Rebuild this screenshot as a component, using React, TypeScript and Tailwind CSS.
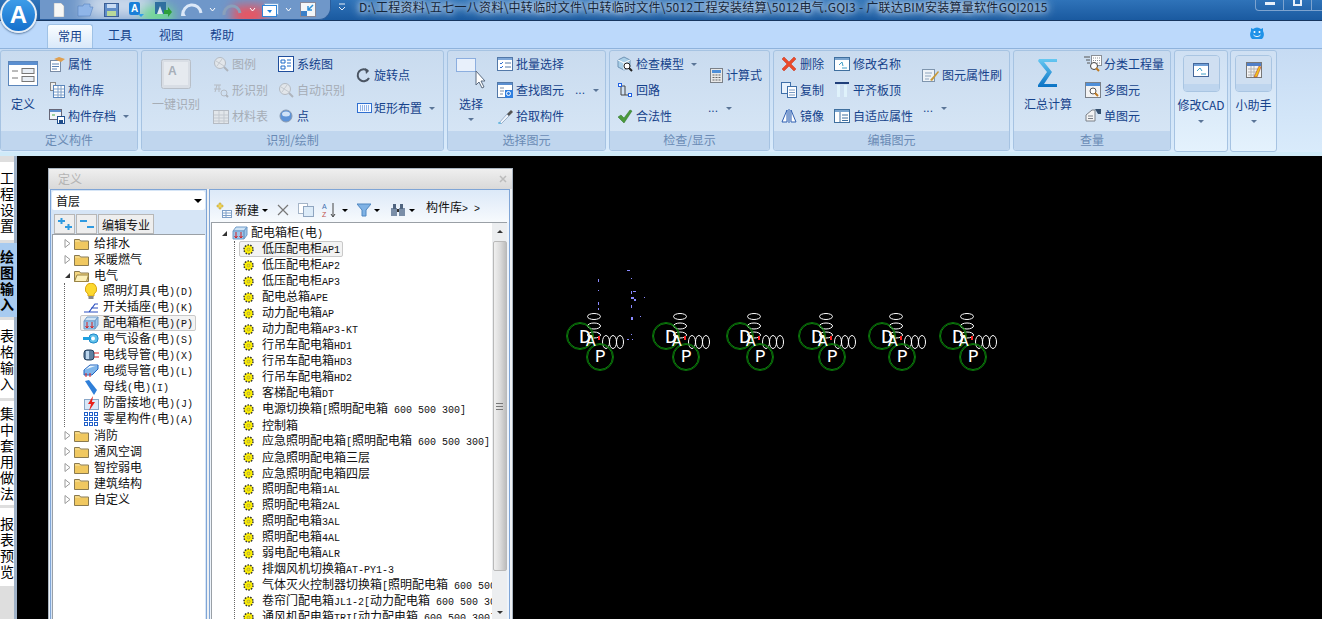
import type { ReactNode } from "react";

const FONT = "font-['Noto_Sans_CJK_SC','Noto_Sans',sans-serif]";

// 半角字符用小一号等宽字，接近原图的宋体点阵宽度
function Mixed({ text }: { text: string }) {
  const parts = text.split(/([\x20-\x7e]+)/).filter(Boolean);
  return (
    <>
      {parts.map((p, i) =>
        /^[\x20-\x7e]+$/.test(p) ? (
          <span key={i} className="font-['Liberation_Mono',monospace] text-[10px] whitespace-pre">
            {p}
          </span>
        ) : (
          <span key={i}>{p}</span>
        ),
      )}
    </>
  );
}

function Ico({ w = 16, h = 16, children }: { w?: number; h?: number; children: ReactNode }) {
  return (
    <svg width={w} height={h} viewBox={`0 0 ${w} ${h}`} className="shrink-0">
      {children}
    </svg>
  );
}

/* ---------- ribbon icons ---------- */
const I = {
  define: (
    <Ico w={30} h={25}>
      <rect x=".5" y=".5" width="29" height="24" fill="#fff" stroke="#5b86bb" />
      <rect x="1" y="1" width="28" height="3" fill="#5b8fd0" />
      <path d="M4 10h6M4 17h6" stroke="#777" />
      <rect x="14" y="7.5" width="12" height="5" fill="#e8eef5" stroke="#777" />
      <rect x="14" y="15.5" width="12" height="5" fill="#e8eef5" stroke="#777" />
    </Ico>
  ),
  attr: (
    <Ico>
      <rect x="1.5" y="4.5" width="10" height="11" fill="#fff" stroke="#7a8ca5" />
      <path d="M3 8h7M3 10.5h7M3 13h5" stroke="#5d83b5" />
      <path d="M5 3l5-2 6 2-4 3z" fill="#e0a050" />
    </Ico>
  ),
  lib: (
    <Ico>
      <rect x="1.5" y=".5" width="5" height="8" fill="#eee" stroke="#888" />
      <rect x="4.5" y="3.5" width="11" height="12" fill="#fff" stroke="#5b86bb" />
      <path d="M5 7h10M5 10h10M5 13h10M9 4v11M12 4v11" stroke="#7fa0c8" />
    </Ico>
  ),
  save: (
    <Ico>
      <rect x=".5" y="1.5" width="12" height="10" fill="#f2f5f9" stroke="#667" />
      <rect x="1" y="2" width="11" height="2" fill="#5b8fd0" />
      <path d="M3 7h3" stroke="#4a4" />
      <rect x="8.5" y="8.5" width="7" height="7" fill="#fff" stroke="#1f4e8c" />
      <rect x="10" y="12" width="4" height="3" fill="#1f4e8c" />
    </Ico>
  ),
  key: (
    <Ico w={30} h={30}>
      <rect x=".5" y=".5" width="29" height="29" rx="2" fill="#d9dee5" stroke="#b8bfc8" />
      <rect x="3" y="3" width="24" height="23" fill="#e6eaef" />
      <text x="7" y="16" fontSize="12" fontWeight="700" fill="#a7afb9" fontFamily="Liberation Sans">A</text>
    </Ico>
  ),
  gray: (
    <Ico>
      <circle cx="7" cy="7" r="5.5" fill="#e2e6ea" stroke="#b5bbc3" />
      <path d="M3 5l8 5M4 10l5-7" stroke="#c5cad0" />
      <path d="M11 11l4 4" stroke="#aeb4bc" strokeWidth="2" />
    </Ico>
  ),
  shapeGray: (
    <Ico>
      <path d="M1 3h7M1 7h7M4 3l-2 7M6 3v7" stroke="#b5bbc3" fill="none" />
      <circle cx="11" cy="11" r="3" fill="none" stroke="#b5bbc3" />
      <path d="M13 13l2 2" stroke="#aeb4bc" strokeWidth="2" />
    </Ico>
  ),
  tableGray: (
    <Ico>
      <rect x=".5" y="2.5" width="15" height="13" fill="#e2e6ea" stroke="#b5bbc3" />
      <path d="M1 7h14M1 10h14M1 13h14M6 3v12M11 3v12" stroke="#c3c9d0" />
    </Ico>
  ),
  sys: (
    <Ico>
      <rect x=".5" y=".5" width="15" height="15" fill="#fff" stroke="#1f4e9c" />
      <path d="M3 4h4v3H3zM9 4h4M9 7h4M9 10h4M3 10h4v3H3z" fill="none" stroke="#1f6ac8" />
    </Ico>
  ),
  dot: (
    <Ico>
      <circle cx="8" cy="8" r="6" fill="#5d93d8" stroke="#8a9bb2" />
      <ellipse cx="8" cy="6" rx="4" ry="2.5" fill="#cfe2f8" />
    </Ico>
  ),
  rotate: (
    <Ico>
      <path d="M12 4a6 6 0 1 0 1 7" fill="none" stroke="#4b5563" strokeWidth="2" />
      <path d="M9 1l4 3-3 3z" fill="#4b5563" />
    </Ico>
  ),
  rect: (
    <Ico w={15} h={12}>
      <rect x=".5" y="1.5" width="14" height="9" fill="#f5f9ff" stroke="#2f6fd0" />
      <path d="M3 4h9M3 6h9M3 8h9" stroke="#2f6fd0" strokeDasharray="1 1" />
    </Ico>
  ),
  pick: (
    <Ico w={30} h={32}>
      <rect x=".5" y=".5" width="19" height="13" fill="#e8f0fb" stroke="#3f77c8" strokeDasharray="1 1" />
      <path d="M20 13v14l3-3 3 6 2-1-3-6h4z" fill="#fff" stroke="#5b6b80" />
    </Ico>
  ),
  batch: (
    <Ico>
      <rect x=".5" y="1.5" width="15" height="13" fill="#fff" stroke="#5278a8" />
      <rect x="1" y="2" width="14" height="2" fill="#7fa7d8" />
      <path d="M3 7l1 1 2-2M3 11l1 1 2-2" stroke="#2f6fd0" fill="none" />
      <path d="M8 7h6M8 11h6" stroke="#5278a8" />
    </Ico>
  ),
  find: (
    <Ico>
      <rect x=".5" y=".5" width="15" height="15" fill="#fff" stroke="#5278a8" />
      <rect x="1" y="1" width="14" height="2" fill="#5b8fd0" />
      <path d="M3 6h4M3 9h4M3 12h3" stroke="#7a8ca5" />
      <rect x="8" y="8" width="8" height="8" fill="#2f7fe0" />
      <circle cx="11.5" cy="11.5" r="2" fill="none" stroke="#fff" />
    </Ico>
  ),
  dropper: (
    <Ico>
      <path d="M2 15l8-9 2 2-8 8z" fill="#eef4fb" stroke="#9db2cc" />
      <path d="M10 6l4-4 2 2-4 4z" fill="#555" />
      <path d="M1 15h3" stroke="#3fb0e0" />
    </Ico>
  ),
  check: (
    <Ico>
      <path d="M1 4l6-3 6 3v7l-6 3-6-3z" fill="#a9cfe8" stroke="#6f93b4" />
      <path d="M1 4l6 3 6-3M7 7v7" stroke="#fff" fill="none" />
      <circle cx="10" cy="10" r="3" fill="#fff" stroke="#222" />
      <path d="M12 12l3 3" stroke="#222" strokeWidth="2" />
    </Ico>
  ),
  loop: (
    <Ico>
      <path d="M4 4v9h9" fill="none" stroke="#444" />
      <path d="M4 4h4v9" fill="none" stroke="#444" />
      <rect x="1.5" y="1.5" width="3" height="3" fill="#fff" stroke="#1f5fe0" />
      <rect x="11.5" y="11.5" width="3" height="3" fill="#fff" stroke="#1f5fe0" />
    </Ico>
  ),
  tick: (
    <Ico>
      <path d="M1 9l3-2 3 3 6-8 2 1-8 12z" fill="#4a9a3a" stroke="#2d6e2a" strokeWidth=".5" />
    </Ico>
  ),
  calc: (
    <Ico w={13} h={15}>
      <rect x=".5" y=".5" width="12" height="14" fill="#e8e8e8" stroke="#7a8088" />
      <rect x="2" y="2" width="9" height="3" fill="#4f8fd8" />
      <path d="M2.5 7h2M5.500 7h2M8.500 7h2M2.500 9.500h2M5.500 9.500h2M8.500 9.500h2M2.500 12h2M5.500 12h2M8.500 12h2" stroke="#666" />
    </Ico>
  ),
  del: (
    <Ico>
      <path d="M1 3l2-2 5 5 5-5 2 2-5 5 5 5-2 2-5-5-5 5-2-2 5-5z" fill="#ea4a2a" stroke="#c8321a" strokeWidth=".5" />
    </Ico>
  ),
  copy: (
    <Ico>
      <rect x=".5" y=".5" width="9" height="11" fill="#e8f2fc" stroke="#3f6fa8" />
      <rect x="6.500" y="4.500" width="9" height="11" fill="#fff" stroke="#3f6fa8" />
      <path d="M8 8h6M8 10.500h6M8 13h6" stroke="#7a9cc4" />
    </Ico>
  ),
  mirror: (
    <Ico>
      <path d="M6 2L1 14h5zM10 2l5 12h-5z" fill="#fff" stroke="#2f5fb0" />
      <path d="M8 1v14" stroke="#2f5fb0" />
    </Ico>
  ),
  rename: (
    <Ico>
      <rect x=".5" y="1.500" width="15" height="13" fill="#fff" stroke="#3f6f9e" />
      <rect x="1" y="2" width="14" height="2" fill="#7aa5d0" />
      <path d="M5 9l3-3 1 4M8 12h5" stroke="#3fa0c8" fill="none" />
    </Ico>
  ),
  align: (
    <Ico>
      <path d="M1 1h14" stroke="#1f3f7a" strokeWidth="2" />
      <rect x="3" y="3" width="3" height="12" fill="#dff2fb" />
      <rect x="10" y="3" width="3" height="12" fill="#dff2fb" />
    </Ico>
  ),
  fit: (
    <Ico>
      <rect x=".5" y="1.500" width="15" height="13" fill="#fff" stroke="#3f6f9e" />
      <rect x="1" y="2" width="14" height="2" fill="#7aa5d0" />
      <path d="M6 4v10M8 7h6M8 10h6M8 12.500h6" stroke="#3f6f9e" />
    </Ico>
  ),
  brush: (
    <Ico w={18} h={16}>
      <rect x=".5" y="2.500" width="12" height="12" fill="#eef3f8" stroke="#7f95ad" />
      <path d="M3 6h7M3 9h6M3 12h4" stroke="#8ea5be" />
      <path d="M8 13l8-9 1 1-7 9z" fill="#c89a3a" />
    </Ico>
  ),
  classify: (
    <Ico w={18} h={18}>
      <path d="M0 2h6M2 5h4M3 8h3" stroke="#555" />
      <rect x="7.500" y=".5" width="10" height="10" fill="#fff" stroke="#8a8f96" />
      <path d="M9 3h7M9 5.500h7M9 8h7" stroke="#8a8f96" strokeDasharray="1 1" />
      <circle cx="10" cy="11" r="3.500" fill="#fff" stroke="#444" />
      <path d="M12 13l3 3" stroke="#c07a20" strokeWidth="2" />
    </Ico>
  ),
  multi: (
    <Ico>
      <rect x=".5" y=".5" width="15" height="15" fill="#f3f3f3" stroke="#7a8088" />
      <rect x="1" y="1" width="14" height="3" fill="#4f8fd8" />
      <circle cx="8" cy="9" r="3" fill="#fff" stroke="#555" />
      <path d="M10 11l3 3" stroke="#c07a20" strokeWidth="2" />
    </Ico>
  ),
  single: (
    <Ico>
      <path d="M1 7l6-5h3v11H1z" fill="#f3f3f3" stroke="#7a8088" />
      <path d="M3 8h5M3 10.500h5" stroke="#7a8088" />
      <path d="M10 1h6v5h-3z" fill="#35506f" />
    </Ico>
  ),
  cad: (
    <Ico>
      <rect x=".5" y="1.500" width="15" height="13" fill="#fff" stroke="#44679a" />
      <rect x="1" y="2" width="14" height="2" fill="#6f9ed6" />
      <path d="M4 9l3-3 2 3M8 12h5" stroke="#3fa0c8" fill="none" />
    </Ico>
  ),
  helper: (
    <Ico>
      <rect x=".5" y=".5" width="15" height="15" fill="#f3f3f3" stroke="#777" />
      <rect x="1" y="1" width="14" height="3" fill="#4f7fc8" />
      <path d="M2 7h10M2 10h10M2 13h10M5 4v11M8 4v11" stroke="#b5b5b5" />
      <path d="M8 15l5-11 2 1-4 10z" fill="#f2c21a" stroke="#a33" strokeWidth=".5" />
    </Ico>
  ),
};

/* ---------- ribbon parts ---------- */
function Caret({ className = "" }: { className?: string }) {
  return <span className={`inline-block h-0 w-0 border-x-[3px] border-t-[3px] border-x-transparent border-t-[#5a7597] ${className}`} />;
}

function Item({ icon, label, off, caret, gap = 3 }: { icon: ReactNode; label: string; off?: boolean; caret?: boolean; gap?: number }) {
  return (
    <div className={`flex h-[26px] items-center whitespace-nowrap ${off ? "text-[#a6adb6]" : "text-[#15428b]"}`}>
      <span className="flex w-4 shrink-0 items-center justify-center">{icon}</span>
      <span style={{ marginLeft: gap }}>{label}</span>
      {caret && <Caret className="ml-[7px]" />}
    </div>
  );
}

function Dots({ className = "" }: { className?: string }) {
  return (
    <div className={`flex h-[26px] items-center gap-[8px] text-[#15428b] ${className}`}>
      <span className="font-['Liberation_Sans',sans-serif] leading-none">...</span>
      <Caret />
    </div>
  );
}

function Big({ icon, label, w, mr = 0, off, caret }: { icon: ReactNode; label: string; w: number; mr?: number; off?: boolean; caret?: boolean }) {
  return (
    <div style={{ width: w, marginRight: mr }} className={`flex shrink-0 flex-col items-center ${off ? "text-[#a6adb6]" : "text-[#15428b]"}`}>
      <div className="flex h-[45px] items-center justify-center">{icon}</div>
      <div className="h-4 whitespace-nowrap leading-4">{label}</div>
      {caret && <Caret className="mt-[6px]" />}
    </div>
  );
}

function Group({ w, label, children }: { w: number; label: string; children: ReactNode }) {
  return (
    <div style={{ width: w }} className="flex h-[101px] shrink-0 flex-col overflow-hidden rounded-[3px] border border-[#a6c3e2] bg-gradient-to-b from-[#c9dbef] to-[#d8e7f6]">
      <div className="flex h-[80px]">{children}</div>
      <div className="h-[19px] bg-[#c0d6ee] text-center leading-[18px] text-[#6a8bb5]">{label}</div>
    </div>
  );
}

function Solo({ w, icon, label, className = "" }: { w: number; icon: ReactNode; label: string; className?: string }) {
  return (
    <div style={{ width: w }} className={`flex h-[102px] shrink-0 flex-col items-center rounded-[3px] border border-[#a6c3e2] bg-gradient-to-b from-[#cfe0f3] to-[#e4f2fd] pt-1 text-[#15428b] ${className}`}>
      <div className="flex h-[37px] w-[37px] flex-col overflow-hidden rounded-[4px] border border-[#a9c5e2]">
        <div className="flex flex-1 items-center justify-center bg-[#cfdff1]">{icon}</div>
        <div className="h-[7px] bg-[#bed5ee]" />
      </div>
      <div className="mt-[5px] h-4 whitespace-nowrap leading-4">{label}</div>
      <Caret className="mt-[7px]" />
    </div>
  );
}

function Ribbon() {
  return (
    <div className="flex h-[104px] shrink-0 gap-[3px] border-t border-[#8fb3dc] bg-gradient-to-b from-[#c6dbf3] to-[#d9ebfb] pt-[1px] text-[12px]">
      <Group w={138} label="定义构件">
        <Big w={44} mr={4} icon={I.define} label="定义" />
        <div>
          <Item icon={I.attr} label="属性" />
          <Item icon={I.lib} label="构件库" />
          <Item icon={I.save} label="构件存档" caret />
        </div>
      </Group>
      <Group w={303} label="识别/绘制">
        <Big w={68} mr={3} icon={I.key} label="一键识别" off />
        <div className="w-[65px]">
          <Item icon={I.gray} label="图例" off />
          <Item icon={I.shapeGray} label="形识别" off />
          <Item icon={I.tableGray} label="材料表" off />
        </div>
        <div className="w-[78px]">
          <Item icon={I.sys} label="系统图" />
          <Item icon={I.gray} label="自动识别" off />
          <Item icon={I.dot} label="点" />
        </div>
        <div className="flex flex-col gap-[7px] pt-[11px]">
          <Item icon={I.rotate} label="旋转点" gap={2} />
          <Item icon={I.rect} label="矩形布置" caret gap={2} />
        </div>
      </Group>
      <Group w={159} label="选择图元">
        <Big w={46} mr={3} icon={I.pick} label="选择" caret />
        <div className="w-[78px]">
          <Item icon={I.batch} label="批量选择" />
          <Item icon={I.find} label="查找图元" />
          <Item icon={I.dropper} label="拾取构件" />
        </div>
        <Dots className="mt-[26px]" />
      </Group>
      <Group w={161} label="检查/显示">
        <div className="w-[98px] shrink-0 pl-[7px]">
          <Item icon={I.check} label="检查模型" caret />
          <Item icon={I.loop} label="回路" />
          <Item icon={I.tick} label="合法性" />
        </div>
        <div className="flex flex-col gap-[7px] pt-[11px]">
          <Item icon={I.calc} label="计算式" gap={2} />
          <Dots />
        </div>
      </Group>
      <Group w={237} label="编辑图元">
        <div className="w-[60px] shrink-0 pl-[7px]">
          <Item icon={I.del} label="删除" />
          <Item icon={I.copy} label="复制" />
          <Item icon={I.mirror} label="镜像" />
        </div>
        <div className="w-[89px] shrink-0">
          <Item icon={I.rename} label="修改名称" />
          <Item icon={I.align} label="平齐板顶" />
          <Item icon={I.fit} label="自适应属性" />
        </div>
        <div className="flex flex-col gap-[7px] pt-[11px]">
          <Item icon={I.brush} label="图元属性刷" gap={3} />
          <Dots />
        </div>
      </Group>
      <Group w={158} label="查量">
        <Big
          w={68}
          mr={3}
          icon={
            <svg width="20" height="29" viewBox="0 0 20 29">
              <defs>
                <linearGradient id="sigma" x1="0" y1="0" x2="0" y2="1">
                  <stop offset="0" stopColor="#66c8f2" />
                  <stop offset="1" stopColor="#0a72c4" />
                </linearGradient>
              </defs>
              <path d="M1 0h18v3H6l8 10-8 12h13v3H0v-2l9-13L0 2z" fill="url(#sigma)" />
            </svg>
          }
          label="汇总计算"
        />
        <div>
          <Item icon={I.classify} label="分类工程量" />
          <Item icon={I.multi} label="多图元" />
          <Item icon={I.single} label="单图元" />
        </div>
      </Group>
      <Solo w={54} icon={I.cad} label="修改CAD" />
      <Solo w={47} icon={I.helper} label="小助手" className="-ml-px" />
    </div>
  );
}

/* ---------- title bar ---------- */
function Quick({ children }: { children: ReactNode }) {
  return <span className="flex h-[20px] w-[26px] shrink-0 items-center justify-center">{children}</span>;
}

function Chevron() {
  return (
    <svg width="7" height="5" viewBox="0 0 7 5" className="shrink-0">
      <path d="M1 1l2.500 3L6 1" fill="none" stroke="#fff" />
    </svg>
  );
}

function TitleBar() {
  return (
    <div className="relative flex h-[21px] shrink-0 items-start overflow-hidden border-b border-[#17365f] bg-gradient-to-b from-[#2f73b9] to-[#1a5aa0]">
      <div className="relative ml-[40px] flex h-[20px] w-[291px] items-center overflow-hidden rounded-br-[12px] border-r border-b border-[#2a5d9c] bg-[#6f97c9] pl-[6px]">
        <span className="absolute left-[45px] top-[-8px] h-[26px] w-[70px] bg-white/70 blur-[9px]" />
        <span className="absolute left-[103px] top-[8px] h-[14px] w-[30px] bg-[#6fe08a] blur-[6px]" />
        <span className="absolute left-[193px] top-[6px] h-[18px] w-[32px] bg-[#f0505a] blur-[6px]" />
        <span className="relative flex items-center">
          <Quick>
            <svg width="14" height="14" viewBox="0 0 14 14"><path d="M2 0h7l3 3v11H2z" fill="#f7f7f5" stroke="#a5a5a5" strokeWidth=".5" /></svg>
          </Quick>
          <Quick>
            <svg width="17" height="14" viewBox="0 0 17 14"><path d="M1 3h5l1-2h6v3h3l-3 9H1z" fill="#8fb5e8" stroke="#4f7ab8" strokeWidth=".5" /></svg>
          </Quick>
          <Quick>
            <svg width="15" height="14" viewBox="0 0 15 14"><rect x=".5" y=".5" width="14" height="13" fill="#5f8cc8" stroke="#3a5f96" /><rect x="3" y="1" width="9" height="4" fill="#c9dcf3" /><rect x="3" y="8" width="9" height="5" fill="#b8d89a" /></svg>
          </Quick>
          <Quick>
            <svg width="18" height="15" viewBox="0 0 18 15"><rect x="1" y="0" width="11" height="13" rx="2" fill="#1a7fd8" /><text x="3" y="10" fontSize="10" fontWeight="700" fill="#fff" fontFamily="Liberation Sans">A</text><path d="M10 12h6l-3 3z" fill="#2fa0e8" /></svg>
          </Quick>
          <Quick>
            <svg width="18" height="15" viewBox="0 0 18 15"><rect x="1" y="0" width="11" height="12" fill="#2f6f9f" /><path d="M3 12l3-8 3 8z" fill="#dfe8f0" /><path d="M10 8h4V5l4 5-4 5v-3h-4z" fill="#2e9e3a" /></svg>
          </Quick>
          <span className="flex w-[41px] items-center gap-[3px] pl-[4px]">
            <svg width="26" height="14" viewBox="0 0 26 14" className="shrink-0"><path d="M3 12a9 9 0 0 1 18-2" fill="none" stroke="#dbe8f8" strokeWidth="3" /><path d="M2 7l4 6-5 0z" fill="#dbe8f8" /></svg>
            <Chevron />
          </span>
          <span className="flex w-[40px] items-center pl-[5px]">
            <svg width="22" height="14" viewBox="0 0 22 14" className="shrink-0"><path d="M2 12a8 8 0 0 1 16-2" fill="none" stroke="#8aa0bb" strokeWidth="3" /></svg>
            <span className="ml-[5px]"><Chevron /></span>
          </span>
          <span className="flex w-[35px] items-center gap-[6px] pl-[5px]">
            <svg width="17" height="14" viewBox="0 0 17 14" className="shrink-0"><rect x="2.500" y=".5" width="14" height="11" fill="#e8f2fc" stroke="#7fa5d0" /><rect x=".5" y="2.500" width="14" height="11" fill="#fff" stroke="#2f85d8" /><path d="M5 7h5l-2 3z" fill="#1f7fd8" /></svg>
            <Chevron />
          </span>
          <svg width="16" height="15" viewBox="0 0 16 15" className="ml-[8px] shrink-0"><rect x=".5" y=".5" width="15" height="14" fill="#f4f6f8" stroke="#889" /><rect x="1" y="9" width="6" height="5" fill="#3a7fc8" /><path d="M13 3l-5 5M8 4v4h4" fill="none" stroke="#2f8fd8" strokeWidth="1.500" /></svg>
        </span>
      </div>
      <svg width="8" height="8" viewBox="0 0 8 8" className="ml-[7px] mt-[3px]"><path d="M1 1h6M1 4l3 3 3-3" fill="none" stroke="#e6eef8" /></svg>
      <span className="ml-[13px] whitespace-nowrap text-[12px] leading-[14px] tracking-[0.26px] text-[#16263a] [text-shadow:0_0_5px_#dce9f7,0_0_8px_#dce9f7,0_0_12px_#dce9f7]">
        D:\工程资料\五七一八资料\中转临时文件\中转临时文件\5012工程安装结算\5012电气.GQI3 - 广联达BIM安装算量软件GQI2015
      </span>
      <div className="absolute right-0 top-0 flex h-[11px] w-[67px] rounded-bl-[4px] border-b border-l border-[#7da3cf]">
        <span className="flex flex-1 items-start justify-center border-r border-[#7da3cf] pt-[2px]"><span className="h-[3px] w-[10px] bg-[#e8f0fa]" /></span>
        <span className="flex flex-1 items-start justify-center border-r border-[#7da3cf]"><span className="h-[6px] w-[9px] border-2 border-t-0 border-[#e8f0fa]" /></span>
        <span className="w-[10px]" />
      </div>
    </div>
  );
}

function Tabs() {
  const names = ["工具", "视图", "帮助"];
  return (
    <div className="flex h-[27px] shrink-0 items-end bg-[#bcd9fb] pl-[47px] text-[12px] text-[#15428b]">
      <div className="h-[24px] w-[46px] rounded-t-[3px] border border-b-0 border-[#9fc2e6] bg-gradient-to-b from-[#fafdff] to-[#d9e9fa] pt-[3px] text-center leading-4">常用</div>
      <div className="flex items-center pb-[5px] pl-[15px]">
        {names.map((n) => (
          <span key={n} className="w-[51px] leading-4">{n}</span>
        ))}
      </div>
      <svg width="18" height="18" viewBox="0 0 18 18" className="ml-auto mb-[6px] mr-[56px]">
        <path d="M3 4l2 1a6 6 0 0 1 8 0l2-1 0 3a7 7 0 0 1-1 8H4a7 7 0 0 1-1-8z" fill="#1e92e8" />
        <circle cx="6.500" cy="8" r="1" fill="#fff" /><circle cx="11.500" cy="8" r="1" fill="#fff" />
        <path d="M5.500 11c2 2 5 2 7 0" fill="none" stroke="#fff" />
      </svg>
    </div>
  );
}

/* ---------- left rail ---------- */
const railTabs = [
  { text: "工程设置", h: 78 },
  { text: "绘图输入", h: 74, active: true },
  { text: "表格输入", h: 78 },
  { text: "集中套用做法", h: 104 },
  { text: "报表预览", h: 78 },
];

function Rail() {
  return (
    <div className="flex w-[17px] shrink-0 flex-col gap-[3px] border-r-[3px] border-[#9fb1c6] bg-[#dedede] pt-[6px]">
      {railTabs.map((t) => (
        <div
          key={t.text}
          style={{ height: t.h }}
          className={`flex shrink-0 flex-col items-center justify-center text-[14px] leading-[16px] text-black ${
            t.active ? "-mr-[3px] bg-[#a8cbf0] font-bold" : "bg-white"
          }`}
        >
          {t.text.split("").map((c, i) => (
            <span key={i} className={t.active ? "-ml-[3px]" : ""}>{c}</span>
          ))}
        </div>
      ))}
    </div>
  );
}

/* ---------- tree icons ---------- */
function Folder({ open }: { open?: boolean }) {
  return (
    <svg width="15" height="13" viewBox="0 0 15 13" className="shrink-0">
      <path d="M.5 2.500h5l1 1.500h8v8.500H.5z" fill="#f5d782" stroke="#8a7a50" />
      {open ? <path d="M3 6h11.500l-2 6.500H.5z" fill="#fdf0b8" stroke="#9a8442" /> : <rect x="1" y="5" width="13" height="7" fill="#f0c860" />}
    </svg>
  );
}

function Arrow({ open }: { open?: boolean }) {
  return open ? (
    <svg width="7" height="7" viewBox="0 0 7 7" className="shrink-0"><path d="M6 1v5H1z" fill="#333" /></svg>
  ) : (
    <svg width="7" height="9" viewBox="0 0 7 9" className="shrink-0"><path d="M1 .5l5 4-5 4z" fill="#fff" stroke="#999" /></svg>
  );
}

function Gear() {
  return (
    <svg width="11" height="11" viewBox="0 0 11 11" className="shrink-0">
      <circle cx="5.500" cy="5.500" r="4.500" fill="#fff200" stroke="#333" strokeWidth="1.500" strokeDasharray="1.500 1.300" />
      <circle cx="5.500" cy="5.500" r="1.500" fill="#f7e600" stroke="#777" strokeWidth=".5" />
    </svg>
  );
}

const kids: { label: string; icon: ReactNode; active?: boolean }[] = [
  { label: "照明灯具(电)(D)", icon: <svg width="14" height="16" viewBox="0 0 14 16"><path d="M7 0a6 6 0 0 1 3 11v2H4v-2A6 6 0 0 1 7 0z" fill="#fcd82e" stroke="#d9a514" /><rect x="4.500" y="13" width="5" height="3" fill="#888" /></svg> },
  { label: "开关插座(电)(K)", icon: <svg width="16" height="14" viewBox="0 0 16 14"><path d="M1 12h5l6-8h3M6 12h9M8 8h7" fill="none" stroke="#2a4fc0" strokeWidth="1.200" /></svg> },
  { label: "配电箱柜(电)(P)", active: true, icon: <svg width="16" height="14" viewBox="0 0 16 14"><path d="M1 5l3-4h11l-3 4z" fill="#cde3f6" stroke="#6f9bc8" /><path d="M1 5h11v8H1zM12 5l3-4v8l-3 4z" fill="#9dc5ea" stroke="#6f9bc8" /><path d="M4 6v6M9 6v6M2.500 10L4 12l1.500-2M7.500 10L9 12l1.500-2" stroke="#d52020" fill="none" /></svg> },
  { label: "电气设备(电)(S)", icon: <svg width="16" height="12" viewBox="0 0 16 12"><rect x="6" y="1" width="9" height="9" rx="4" fill="#5fc0ea" stroke="#1f88c8" /><rect x="0" y="4" width="9" height="3" fill="#1fa0e0" /><circle cx="10" cy="5.500" r="2" fill="#fff" /></svg> },
  { label: "电线导管(电)(X)", icon: <svg width="16" height="12" viewBox="0 0 16 12"><rect x="1" y="1" width="10" height="10" rx="3" fill="#5f7f9f" stroke="#24405f" /><rect x="3" y="2" width="3" height="8" fill="#bcd6ee" /><path d="M11 4h5M11 8h5" stroke="#e02020" /></svg> },
  { label: "电缆导管(电)(L)", icon: <svg width="16" height="14" viewBox="0 0 16 14"><path d="M1 6l6-5h8l-5 6H2z" fill="#e8f4fd" stroke="#1f62c0" /><path d="M1 6v5h8l6-6V1" fill="#7fb5ea" stroke="#1f62c0" /><path d="M3 9v4M7 9v4" stroke="#e02020" /></svg> },
  { label: "母线(电)(I)", icon: <svg width="14" height="15" viewBox="0 0 14 15"><path d="M1 1l4-1 8 10-3 5z" fill="#2f7fd8" /></svg> },
  { label: "防雷接地(电)(J)", icon: <svg width="15" height="15" viewBox="0 0 15 15"><rect x=".5" y="3.500" width="14" height="10" fill="#d9e8f8" stroke="#8aa7c8" /><path d="M9 0L4 8h3l-2 7 6-9H8z" fill="#e8201a" /></svg> },
  { label: "零星构件(电)(A)", icon: <svg width="14" height="14" viewBox="0 0 14 14" fill="none" stroke="#1f5fc8"><rect x=".5" y=".5" width="3" height="3" /><rect x="5.500" y=".5" width="3" height="3" /><rect x="10.500" y=".5" width="3" height="3" /><rect x=".5" y="5.500" width="3" height="3" /><rect x="5.500" y="5.500" width="3" height="3" /><rect x="10.500" y="5.500" width="3" height="3" /><rect x=".5" y="10.500" width="3" height="3" /><rect x="5.500" y="10.500" width="3" height="3" /><rect x="10.500" y="10.500" width="3" height="3" /></svg> },
];

function FolderRow({ label, open }: { label: string; open?: boolean }) {
  return (
    <div className="flex h-4 items-center pl-[10px]">
      <span className="flex w-[9px] justify-center"><Arrow open={open} /></span>
      <span className="ml-[2px]"><Folder open={open} /></span>
      <span className="ml-[5px] leading-4">{label}</span>
    </div>
  );
}

function LeftPanel() {
  return (
    <div className="flex w-[157px] shrink-0 flex-col border border-b-0 border-[#7fa5d6] bg-[#d6e5f6] text-[12px] text-[#111]">
      <div className="mx-[1px] mt-[1px] flex h-[19px] items-center justify-between rounded-[2px] bg-white pl-[4px] pr-[3px] leading-4">
        首层
        <span className="h-0 w-0 border-x-[4px] border-t-[4px] border-x-transparent border-t-black" />
      </div>
      <div className="ml-[3px] mt-[4px] flex h-[20px] gap-[1px]">
        <span className="flex w-[21px] items-center justify-center border border-[#b7b7b7] bg-[#eeeeee]">
          <svg width="16" height="16" viewBox="0 0 16 16"><path d="M1 5h7M4.500 2v6M8 11h7M11.500 8v6" stroke="#2f9ae0" strokeWidth="2" /></svg>
        </span>
        <span className="flex w-[21px] items-center justify-center border border-[#b7b7b7] bg-[#eeeeee]">
          <svg width="16" height="16" viewBox="0 0 16 16"><path d="M1 5h7M8 11h7" stroke="#2f9ae0" strokeWidth="2" /></svg>
        </span>
        <span className="w-[56px] border border-[#b7b7b7] bg-[#eeeeee] text-center leading-[19px]">编辑专业</span>
      </div>
      <div className="ml-[1px] mr-[1px] flex-1 overflow-hidden border-l border-t border-[#9aa0a6] bg-white">
        <FolderRow label="给排水" />
        <FolderRow label="采暖燃气" />
        <FolderRow label="电气" open />
        <div className="ml-[11px] border-l border-dotted border-[#666] pl-[15px]">
          {kids.map((k) => (
            <div
              key={k.label}
              className={`flex h-4 w-fit items-center whitespace-nowrap rounded-[2px] border pl-[2px] pr-[2px] ${k.active ? "border-[#c9c9c9] bg-[#f3f3f3]" : "border-transparent"}`}
            >
              <span className="flex w-4 justify-center">{k.icon}</span>
              <span className="ml-[4px] leading-[14px]">
                <Mixed text={k.label} />
              </span>
            </div>
          ))}
        </div>
        {["消防", "通风空调", "智控弱电", "建筑结构", "自定义"].map((n) => (
          <FolderRow key={n} label={n} />
        ))}
      </div>
    </div>
  );
}

/* ---------- right panel ---------- */
const rows = [
  "低压配电柜AP1",
  "低压配电柜AP2",
  "低压配电柜AP3",
  "配电总箱APE",
  "动力配电箱AP",
  "动力配电箱AP3-KT",
  "行吊车配电箱HD1",
  "行吊车配电箱HD3",
  "行吊车配电箱HD2",
  "客梯配电箱DT",
  "电源切换箱[照明配电箱 600 500 300]",
  "控制箱",
  "应急照明配电箱[照明配电箱 600 500 300]",
  "应急照明配电箱三层",
  "应急照明配电箱四层",
  "照明配电箱1AL",
  "照明配电箱2AL",
  "照明配电箱3AL",
  "照明配电箱4AL",
  "弱电配电箱ALR",
  "排烟风机切换箱AT-PY1-3",
  "气体灭火控制器切换箱[照明配电箱 600 500 300]",
  "卷帘门配电箱JL1-2[动力配电箱 600 500 300]",
  "通风机配电箱TRI[动力配电箱 600 500 300]",
];

function Tiny() {
  return <span className="ml-[3px] h-0 w-0 border-x-[3px] border-t-[3px] border-x-transparent border-t-black" />;
}

function RightPanel() {
  return (
    <div className="flex w-[301px] shrink-0 flex-col border border-b-0 border-[#7fa5d6] bg-[#eef4fb] text-[12px] text-[#111]">
      <div className="flex h-[32px] items-end bg-gradient-to-b from-[#dce9f8] to-[#f7fafd] pb-[4px] pl-[5px]">
        <svg width="18" height="16" viewBox="0 0 18 16" className="shrink-0"><path d="M2 3h2V1h2v2h2v2H6v2H4V5H2z" fill="#f3d75a" stroke="#b59a2a" strokeWidth=".5" /><rect x="7.500" y="8.500" width="9" height="7" fill="#fff" stroke="#7fa0c8" /><path d="M8 11h8M8 13.500h8M11 9v6" stroke="#7fa0c8" /></svg>
        <span className="ml-[2px] flex h-4 items-center leading-4">新建<Tiny /></span>
        <svg width="12" height="12" viewBox="0 0 12 12" className="ml-[9px] mb-[2px]"><path d="M1 1l10 10M11 1L1 11" stroke="#777" strokeWidth="1.200" /></svg>
        <svg width="16" height="14" viewBox="0 0 16 14" className="ml-[9px] mb-[1px]"><rect x=".5" y=".5" width="9" height="10" fill="#fff" stroke="#a5b5c8" /><rect x="5.500" y="3.500" width="10" height="10" fill="#dcebf8" stroke="#8fa5c0" /></svg>
        <span className="ml-[7px] flex h-4 items-center">
          <svg width="18" height="16" viewBox="0 0 18 16"><text x="1" y="7" fontSize="7" fill="#3f6fb0" fontFamily="Liberation Sans">A</text><text x="1" y="15" fontSize="7" fill="#c0504d" fontFamily="Liberation Sans">Z</text><path d="M12 1v13M10 12l2 3 2-3" fill="none" stroke="#444" /></svg>
          <Tiny />
        </span>
        <span className="ml-[9px] flex h-4 items-center">
          <svg width="14" height="14" viewBox="0 0 14 14"><path d="M0 1h14L9 7v6H5V7z" fill="#7fb2e5" stroke="#4f86c0" /></svg>
          <Tiny />
        </span>
        <span className="ml-[10px] flex h-4 items-center">
          <svg width="16" height="14" viewBox="0 0 16 14"><rect x="1" y="5" width="6" height="8" fill="#7a8ea8" /><rect x="9" y="5" width="6" height="8" fill="#7a8ea8" /><rect x="3" y="1" width="3" height="5" fill="#4f6480" /><rect x="10" y="1" width="3" height="5" fill="#4f6480" /><rect x="7" y="6" width="2" height="3" fill="#333" /></svg>
          <Tiny />
        </span>
        <span className="ml-[11px] whitespace-nowrap leading-4">构件库<span className="font-['Liberation_Mono',monospace] text-[10px]">&gt; &gt;</span></span>
      </div>
      <div className="ml-[1px] mr-[2px] flex flex-1 overflow-hidden border-t border-l border-[#9aa0a6] bg-white">
        <div className="min-w-0 flex-1 overflow-hidden">
          <div className="mt-[2px] flex h-4 items-center pl-[9px]">
            <Arrow open />
            <svg width="16" height="14" viewBox="0 0 16 14" className="ml-[4px] shrink-0"><path d="M1 5l3-4h11l-3 4z" fill="#cde3f6" stroke="#6f9bc8" /><path d="M1 5h11v8H1zM12 5l3-4v8l-3 4z" fill="#9dc5ea" stroke="#6f9bc8" /><path d="M4 6v6M9 6v6M2.500 10L4 12l1.500-2M7.500 10L9 12l1.500-2" stroke="#d52020" fill="none" /></svg>
            <span className="ml-[3px] whitespace-nowrap leading-4"><Mixed text="配电箱柜(电)" /></span>
          </div>
          <div className="ml-[22px] border-l border-dotted border-[#666] pl-[4px]">
            {rows.map((r, i) => (
              <div
                key={r}
                className={`flex h-4 w-fit items-center whitespace-nowrap rounded-[2px] border pl-[3px] pr-[2px] ${i === 0 ? "border-[#c9c9c9] bg-[#f3f3f3]" : "border-transparent"}`}
              >
                <Gear />
                <span className="ml-[8px] leading-[14px]">
                  <Mixed text={r} />
                </span>
              </div>
            ))}
          </div>
        </div>
        <div className="flex w-[15px] shrink-0 flex-col items-center bg-[#eceef0]">
          <span className="mt-[7px] h-0 w-0 border-x-[3px] border-b-[3px] border-x-transparent border-b-[#333]" />
          <div className="mt-[8px] flex h-[330px] w-[14px] items-center justify-center rounded-[2px] border border-[#b9b9b9] bg-gradient-to-r from-[#f0f0f0] via-[#dcdcdc] to-[#bdbdbd]">
            <span className="h-[7px] w-[7px] border-y-[1px] border-[#777] [background:linear-gradient(#777,#777)_center/100%_1px_no-repeat]" />
          </div>
          <span className="mt-auto mb-[5px] h-0 w-0 border-x-[3px] border-t-[3px] border-x-transparent border-t-[#333]" />
        </div>
      </div>
    </div>
  );
}

function Dialog() {
  return (
    <div className="absolute left-[31px] top-[12px] flex h-[451px] w-[465px] flex-col border border-b-0 border-[#a9b4c0] bg-[#eef1f4]">
      <div className="flex h-[20px] shrink-0 items-center justify-between bg-gradient-to-b from-[#efefef] to-[#d9d9d9] pl-[9px] pr-[5px] text-[12px] text-[#b4b4b4]">
        定义
        <svg width="8" height="8" viewBox="0 0 8 8"><path d="M1 1l6 6M7 1L1 7" stroke="#bcbcbc" strokeWidth="1.500" /></svg>
      </div>
      <div className="flex min-h-0 flex-1 gap-[2px] pl-[1px]">
        <LeftPanel />
        <RightPanel />
      </div>
    </div>
  );
}

/* ---------- CAD drawing ---------- */
const offsets = [0, 86, 160, 232, 302, 373];
const noise = [
  [598, 279, 1, 3], [598, 290, 1, 1], [598, 302, 1, 3], [598, 308, 1, 2], [627, 270, 3, 1], [631, 278, 1, 1],
  [631, 291, 1, 3], [633, 291, 3, 1], [631, 297, 3, 2], [634, 299, 2, 2], [644, 297, 1, 1], [631, 305, 1, 3],
  [640, 316, 1, 1], [631, 317, 2, 3], [631, 334, 1, 1], [627, 339, 2, 1], [632, 339, 1, 1], [598, 333, 1, 1],
];

function Canvas() {
  return (
    <div className="relative min-w-0 flex-1 bg-black">
      <svg width="1305" height="463" viewBox="17 156 1305 463" className="absolute inset-0">
        {noise.map(([x, y, w, h], i) => (
          <rect key={i} x={x} y={y} width={w} height={h} fill="#8a8aff" />
        ))}
        {offsets.map((dx) => (
          <g key={dx} transform={`translate(${dx} 0)`} fill="none">
            <ellipse cx="594" cy="316.500" rx="6.500" ry="3" stroke="#fff" />
            <ellipse cx="594" cy="326" rx="6.500" ry="3" stroke="#fff" />
            <ellipse cx="594" cy="335" rx="6.500" ry="3" stroke="#fff" />
            <ellipse cx="606" cy="342" rx="3.500" ry="6.500" stroke="#fff" />
            <ellipse cx="613" cy="342" rx="3.500" ry="6.500" stroke="#fff" />
            <ellipse cx="620" cy="342" rx="3.500" ry="6.500" stroke="#fff" />
            <circle cx="580" cy="336" r="12.500" stroke="#0c8a0c" />
            <circle cx="580" cy="336" r="13.500" stroke="#0a6f0a" />
            <circle cx="600" cy="357" r="12.500" stroke="#0c8a0c" />
            <circle cx="600" cy="357" r="13.500" stroke="#0a6f0a" />
            <text x="579" y="343" fontSize="20" fill="#fff" stroke="none" fontFamily="Liberation Mono">D</text>
            <text x="586" y="346" fontSize="16" fill="#fff" stroke="none" fontFamily="Liberation Mono">A</text>
            <text x="595" y="362" fontSize="18" fill="#fff" stroke="none" fontFamily="Liberation Mono">P</text>
            <rect x="598" y="336" width="2" height="4" fill="#f22" />
          </g>
        ))}
      </svg>
      <Dialog />
    </div>
  );
}

export default function App() {
  return (
    <div className={`relative flex h-[619px] w-[1322px] flex-col overflow-hidden bg-black ${FONT}`}>
      <TitleBar />
      <Tabs />
      <Ribbon />
      <div className="h-[4px] shrink-0 bg-[#cfeaf8]" />
      <div className="flex min-h-0 flex-1">
        <Rail />
        <Canvas />
      </div>
      {/* 应用按钮压在标题栏和页签之上 */}
      <div className="absolute left-0 top-[-4px] flex h-[37px] w-[37px] items-center justify-center rounded-full border-2 border-[#e6edf5] bg-gradient-to-b from-[#3f9fea] to-[#1470cc] shadow-[0_1px_2px_#5a7aa0]">
        <span className="font-['Liberation_Sans',sans-serif] text-[24px] font-bold leading-none text-white">A</span>
      </div>
    </div>
  );
}
